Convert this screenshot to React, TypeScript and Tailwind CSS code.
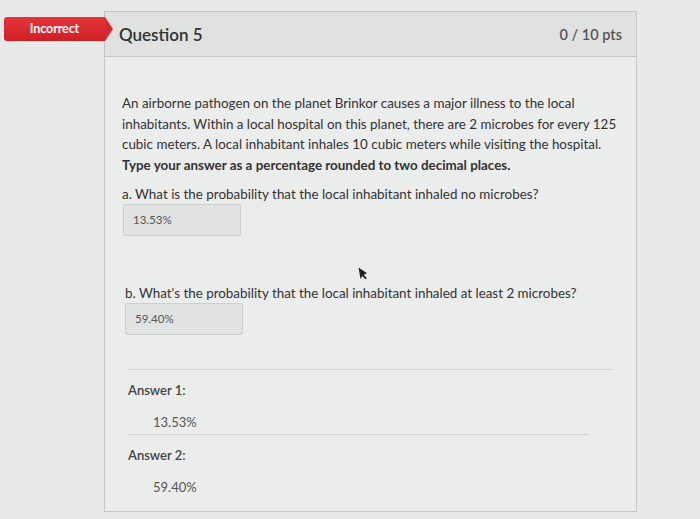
import React from "react";

function Badge() {
  return (
    <div className="absolute left-[-101px] top-[5px] flex items-center">
      <div className="w-[101px] h-[24px] rounded-l-[3px] bg-gradient-to-b from-[#e3353a] to-[#cf1f25] flex items-center justify-center text-white font-bold text-[12.5px] tracking-[-0.1px]">
        Incorrect
      </div>
      <div className="w-0 h-0 border-y-[12px] border-y-transparent border-l-[8px] border-l-[#d8272d]" />
    </div>
  );
}

function AnswerBox({ value, className }: { value: string; className?: string }) {
  return (
    <div
      className={`w-[118px] h-[32px] bg-[#e1e3e3] border border-[#cdd0d0] rounded-[2px] flex items-center pl-[9px] text-[11.5px] text-[#555] ${className ?? ""}`}
    >
      {value}
    </div>
  );
}

function Cursor() {
  return (
    <svg
      className="absolute left-[356px] top-[266px]"
      width="14"
      height="18"
      viewBox="0 0 14 18"
    >
      <path
        d="M2.5 1.5 L4.5 13 L6.3 10 L9.5 13.2 L10.8 11.9 L7.7 8.8 L11 7.3 Z"
        fill="#1f1f1f"
      />
    </svg>
  );
}

export default function App() {
  return (
    <div className="w-[700px] h-[519px] bg-[#e8e9e9] relative overflow-hidden font-['Lato','Noto_Sans',sans-serif] text-[#333]">
      <div className="pt-[11px] pl-[104px]">
        <div className="relative w-[533px] h-[501px] border border-[#c3c5c5] bg-[#ebecec]">
          <Badge />

          {/* header */}
          <div className="h-[45px] bg-[#e0e1e1] border-b border-[#c3c5c5] flex items-center justify-between pl-[14px] pr-[14px]">
            <span className="text-[17px] font-semibold text-[#333] mt-[1px]">Question 5</span>
            <span className="text-[14.5px] font-semibold text-[#555] mt-[1px]">0 / 10 pts</span>
          </div>

          {/* body */}
          <div className="pt-[36px] pl-[17px]">
            <p className="w-[505px] text-[13.4px] leading-[20.5px] text-[#333]">
              An airborne pathogen on the planet Brinkor causes a major illness to the local
              <br />
              inhabitants. Within a local hospital on this planet, there are 2 microbes for every 125
              <br />
              cubic meters. A local inhabitant inhales 10 cubic meters while visiting the hospital.
              <br />
              <strong className="font-bold">Type your answer as a percentage rounded to two decimal places.</strong>
            </p>

            <p className="mt-[9px] text-[13.4px] leading-[20px]">
              a. What is the probability that the local inhabitant inhaled no microbes?
            </p>
            <AnswerBox value="13.53%" className="ml-[1px]" />

            <p className="mt-[47px] ml-[3px] text-[13.4px] leading-[20px]">
              b. What's the probability that the local inhabitant inhaled at least 2 microbes?
            </p>
            <AnswerBox value="59.40%" className="ml-[3px] h-[31px]" />

            {/* answers */}
            <div className="mt-[34px] ml-[6px]">
              <div className="w-[485px] border-t border-[#d3d5d5]" />
              <div className="mt-[10px] text-[13px] leading-[20px] font-semibold text-[#444]">Answer 1:</div>
              <div className="mt-[12px] ml-[25px] text-[13px] leading-[20px] text-[#555]">13.53%</div>
              <div className="mt-[2px] w-[462px] border-t border-[#d3d5d5]" />
              <div className="mt-[10px] text-[13px] leading-[20px] font-semibold text-[#444]">Answer 2:</div>
              <div className="mt-[12px] ml-[25px] text-[13px] leading-[20px] text-[#555]">59.40%</div>
            </div>
          </div>
        </div>
      </div>
      <Cursor />
    </div>
  );
}
